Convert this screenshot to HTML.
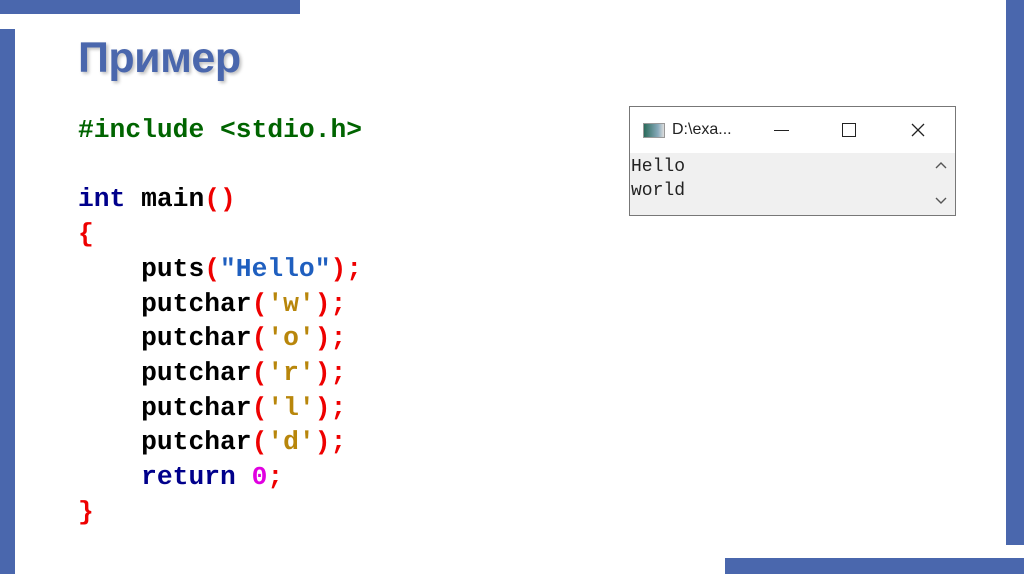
<!DOCTYPE html>
<html><head><meta charset="utf-8"><style>
*{margin:0;padding:0}
body{width:1024px;height:574px;background:#fff;position:relative;overflow:hidden;font-family:"Liberation Sans",sans-serif}
.b{position:absolute;background:#4a67ad}
h1{position:absolute;left:78px;top:34px;font-size:43px;font-weight:bold;color:#4a67ad;text-shadow:2px 2px 3px rgba(0,0,0,.25);letter-spacing:-0.5px}
pre{position:absolute;left:78px;top:113px;font-family:"Liberation Mono",monospace;font-weight:bold;font-size:26.3px;line-height:34.7px;color:#000}
.g{color:#006400}.k{color:#00008b}.r{color:#e00}.s{color:#1f5fbf}.c{color:#b8860b}.n{color:#e000e0}
.win{position:absolute;left:629px;top:106px;width:325px;height:108px;border:1px solid #777;background:#f0f0f0}
.tb{height:46px;background:#fff;position:relative;font-size:16px}
.con{font-family:"Liberation Mono",monospace;font-size:18px;line-height:24px;color:#222;padding:2px 0 0 1px}
</style></head><body>
<div class="b" style="left:0;top:0;width:300px;height:14px"></div>
<div class="b" style="left:0;top:29px;width:15px;height:545px"></div>
<div class="b" style="left:1006px;top:0;width:18px;height:545px"></div>
<div class="b" style="left:725px;top:558px;width:299px;height:16px"></div>
<h1>Пример</h1>
<pre><span class="g">#include &lt;stdio.h&gt;</span>

<span class="k">int</span> main<span class="r">()</span>
<span class="r">{</span>
    puts<span class="r">(</span><span class="s">"Hello"</span><span class="r">);</span>
    putchar<span class="r">(</span><span class="c">'w'</span><span class="r">);</span>
    putchar<span class="r">(</span><span class="c">'o'</span><span class="r">);</span>
    putchar<span class="r">(</span><span class="c">'r'</span><span class="r">);</span>
    putchar<span class="r">(</span><span class="c">'l'</span><span class="r">);</span>
    putchar<span class="r">(</span><span class="c">'d'</span><span class="r">);</span>
    <span class="k">return</span> <span class="n">0</span><span class="r">;</span>
<span class="r">}</span></pre>
<div class="win">
 <div class="tb">
  <div style="position:absolute;left:13px;top:16px;width:20px;height:13px;border:1px solid #999;background:linear-gradient(90deg,#2a6a5a,#8ab 70%,#ddd)"></div>
  <div style="position:absolute;left:42px;top:14px;color:#222">D:\exa...</div>
  <div style="position:absolute;left:144px;top:23px;width:15px;height:1px;background:#222"></div>
  <div style="position:absolute;left:212px;top:16px;width:12px;height:12px;border:1px solid #222"></div>
  <svg style="position:absolute;left:281px;top:16px" width="14" height="14"><path d="M1 1L13 13M13 1L1 13" stroke="#222" stroke-width="1.3"/></svg>
 </div>
 <div class="con">Hello<br>world</div>
 <svg style="position:absolute;right:8px;top:54px" width="12" height="8"><path d="M1 7L6 2L11 7" stroke="#555" fill="none" stroke-width="1.4"/></svg>
 <svg style="position:absolute;right:8px;top:90px" width="12" height="8"><path d="M1 1L6 6L11 1" stroke="#555" fill="none" stroke-width="1.4"/></svg>
</div>
</body></html>
